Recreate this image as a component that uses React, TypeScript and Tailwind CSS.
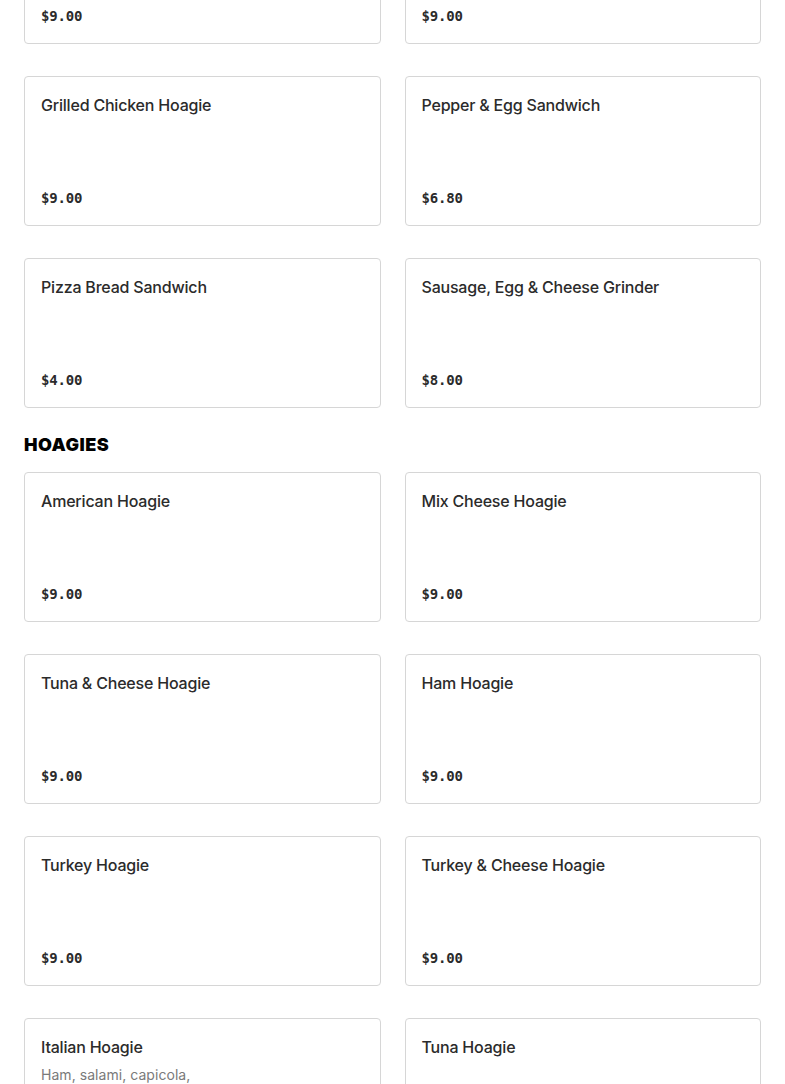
import React from 'react';

type Item = { name: string; price: string; description?: string };

const sandwiches: Item[] = [
  { name: 'Cheesesteak Hoagie', price: '$9.00' },
  { name: 'Chicken Cheesesteak', price: '$9.00' },
  { name: 'Grilled Chicken Hoagie', price: '$9.00' },
  { name: 'Pepper & Egg Sandwich', price: '$6.80' },
  { name: 'Pizza Bread Sandwich', price: '$4.00' },
  { name: 'Sausage, Egg & Cheese Grinder', price: '$8.00' },
];

const hoagies: Item[] = [
  { name: 'American Hoagie', price: '$9.00' },
  { name: 'Mix Cheese Hoagie', price: '$9.00' },
  { name: 'Tuna & Cheese Hoagie', price: '$9.00' },
  { name: 'Ham Hoagie', price: '$9.00' },
  { name: 'Turkey Hoagie', price: '$9.00' },
  { name: 'Turkey & Cheese Hoagie', price: '$9.00' },
  { name: 'Italian Hoagie', price: '$9.00', description: 'Ham, salami, capicola, provolone, lettuce, tomato & onion' },
  { name: 'Tuna Hoagie', price: '$9.00' },
];

function MenuCard({ item }: { item: Item }) {
  return (
    <div className="flex h-[150px] flex-col justify-between rounded-[4px] border border-[#d6d6d6] bg-white px-4 pt-4 pb-[17px]">
      <div>
        <h3 className="text-[16px] leading-6 font-medium tracking-[-0.2px] text-[#2b2b2b] font-['Inter',sans-serif]">
          {item.name}
        </h3>
        {item.description && (
          <p className="mt-[6px] max-w-[210px] text-[14px] leading-5 tracking-[0.05px] text-[#7a7a7a] font-['Inter',sans-serif]">
            {item.description}
          </p>
        )}
      </div>
      <span className="text-[14px] leading-5 font-bold text-[#2b2b2b] font-['DejaVu_Sans_Mono','Liberation_Mono',monospace] tracking-[-0.2px]">
        {item.price}
      </span>
    </div>
  );
}

function MenuGrid({ items }: { items: Item[] }) {
  return (
    <div className="grid grid-cols-2 gap-x-6 gap-y-8">
      {items.map((item) => (
        <MenuCard key={item.name} item={item} />
      ))}
    </div>
  );
}

export default function App() {
  return (
    <div className="min-h-[1084px] overflow-hidden bg-white">
      <div className="-mt-[106px] px-6">
        {/* Sandwiches (scrolled) */}
        <MenuGrid items={sandwiches} />

        {/* Hoagies */}
        <h2 className="pt-[23px] pb-[13px] text-[18px] leading-7 font-black tracking-[0.5px] text-black font-['Inter',sans-serif]">
          HOAGIES
        </h2>
        <MenuGrid items={hoagies} />
      </div>
    </div>
  );
}
